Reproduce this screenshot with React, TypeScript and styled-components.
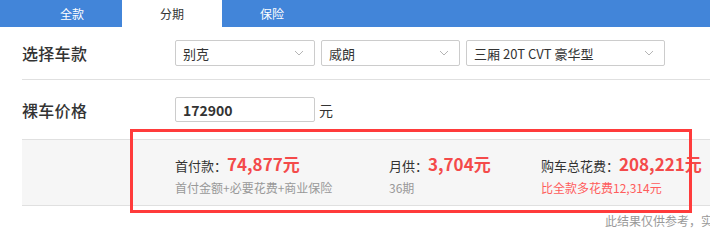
import React from 'react'
import styled, { createGlobalStyle } from 'styled-components'

const GlobalStyle = createGlobalStyle`
	html, body {
		margin: 0;
		padding: 0;
		background: #fff;
		overflow: hidden;
	}
	body {
		font-family: 'Microsoft YaHei', 'Noto Sans CJK SC', 'Noto Sans', sans-serif;
		color: #333;
	}
`

const Page = styled.div`
	position: relative;
	width: 710px;
	height: 243px;
	overflow: hidden;
`

const TabBar = styled.div`
	display: flex;
	height: 27px;
	padding-left: 22px;
	background: #4285d9;
`

const Tab = styled.div<{ $active?: boolean }>`
	width: 100px;
	display: flex;
	align-items: center;
	justify-content: center;
	font-size: 12px;
	color: ${p => (p.$active ? '#333' : '#fff')};
	background: ${p => (p.$active ? '#fff' : 'transparent')};
`

const Content = styled.div`
	padding-left: 22px;
`

const Row = styled.div<{ $divider?: boolean }>`
	display: flex;
	align-items: center;
	height: ${p => (p.$divider ? '53px' : '59px')};
	border-bottom: ${p => (p.$divider ? '1px solid #e0e0e0' : 'none')};
	box-sizing: border-box;
`

const Label = styled.div`
	width: 153px;
	font-size: 16px;
	font-weight: 500;
	color: #333;
	letter-spacing: 0.3px;
`

const SelectGroup = styled.div`
	display: flex;
	gap: 6px;
`

const Select = styled.div<{ $width: number }>`
	width: ${p => p.$width}px;
	height: 26px;
	box-sizing: border-box;
	border: 1px solid #ccc;
	border-radius: 2px;
	display: flex;
	align-items: center;
	justify-content: space-between;
	padding: 0 10px 0 7px;
	font-size: 13px;
	color: #333;
	background: #fff;
`

const PriceInput = styled.input`
	width: 140px;
	height: 25px;
	box-sizing: border-box;
	border: 1px solid #ccc;
	border-radius: 2px;
	padding: 0 0 0 7px;
	font-family: 'Microsoft YaHei', 'Noto Sans CJK SC', 'Noto Sans', sans-serif;
	font-size: 14px;
	font-weight: bold;
	color: #333;
	outline: none;
`

const Unit = styled.span`
	margin-left: 4px;
	font-size: 14px;
	color: #333;
`

const ResultBand = styled.div`
	display: flex;
	height: 67px;
	box-sizing: border-box;
	padding-left: 153px;
	background: #f6f6f6;
	border-top: 1px solid #e0e0e0;
	border-bottom: 1px solid #e0e0e0;
`

const ResultCol = styled.div<{ $width?: number }>`
	width: ${p => (p.$width ? `${p.$width}px` : 'auto')};
	display: flex;
	flex-direction: column;
	padding-top: 11px;
`

const ResultMain = styled.div`
	display: flex;
	align-items: baseline;
	font-size: 13px;
	color: #333;
	height: 24px;
`

const Amount = styled.span`
	font-size: 17px;
	font-weight: bold;
	color: #f44a4a;
	white-space: nowrap;
`

const ResultSub = styled.div<{ $red?: boolean }>`
	margin-top: 4px;
	font-size: 12px;
	color: ${p => (p.$red ? '#ff5c5c' : '#999')};
	white-space: nowrap;
`

const Note = styled.div`
	padding-left: 583px;
	margin-top: 6px;
	font-size: 12px;
	color: #999;
	white-space: nowrap;
`

const Highlight = styled.div`
	position: absolute;
	left: 130px;
	top: 129px;
	width: 562px;
	height: 84px;
	box-sizing: border-box;
	border: 3px solid #ff3b3b;
	pointer-events: none;
`

const Chevron = () => (
	<svg width="10" height="6" viewBox="0 0 10 6" fill="none">
		<path d="M1 1l4 4 4-4" stroke="#b5b5b5" strokeWidth="1" />
	</svg>
)

const results = [
	{ label: '首付款：', amount: '74,877元', sub: '首付金额+必要花费+商业保险', width: 214 },
	{ label: '月供：', amount: '3,704元', sub: '36期', width: 152 },
	{ label: '购车总花费：', amount: '208,221元', sub: '比全款多花费12,314元', red: true },
]

const App: React.FC = () => {
	return (
		<Page>
			<GlobalStyle />
			<TabBar>
				<Tab>全款</Tab>
				<Tab $active>分期</Tab>
				<Tab>保险</Tab>
			</TabBar>
			<Content>
				<Row $divider>
					<Label>选择车款</Label>
					<SelectGroup>
						<Select $width={140}>
							别克
							<Chevron />
						</Select>
						<Select $width={139}>
							威朗
							<Chevron />
						</Select>
						<Select $width={199}>
							三厢 20T CVT 豪华型
							<Chevron />
						</Select>
					</SelectGroup>
				</Row>
				<Row>
					<Label>裸车价格</Label>
					<PriceInput defaultValue="172900" readOnly />
					<Unit>元</Unit>
				</Row>
				<ResultBand>
					{results.map(r => (
						<ResultCol key={r.label} $width={r.width}>
							<ResultMain>
								{r.label}
								<Amount>{r.amount}</Amount>
							</ResultMain>
							<ResultSub $red={r.red}>{r.sub}</ResultSub>
						</ResultCol>
					))}
				</ResultBand>
				<Note>此结果仅供参考，实际应付价格请以当地4S店为准</Note>
			</Content>
			<Highlight />
		</Page>
	)
}

export default App
